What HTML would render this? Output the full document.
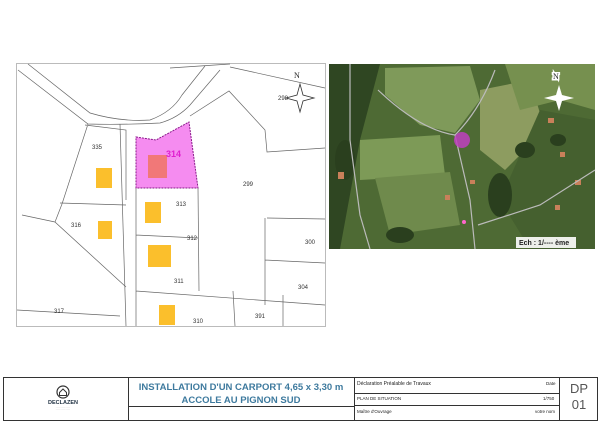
<!DOCTYPE html>
<html><head><meta charset="utf-8"><style>
body{margin:0;width:604px;height:427px;background:#fff;position:relative;overflow:hidden;font-family:"Liberation Sans",sans-serif}
.a{position:absolute}
</style></head><body>
<svg class="a" style="left:0;top:0" width="604" height="370">
<!-- cadastre -->
<rect x="16.5" y="63.5" width="309" height="263" fill="#fff" stroke="#bbb"/>
<g fill="none" stroke="#666" stroke-width="0.7">
<path d="M18 70 L88 124 Q120 125 160 123 Q178 118 190 105 L220 70"/>
<path d="M28 64 L90 113 Q120 122 150 120 Q172 112 182 95 L205 66"/>
<path d="M170 68 L230 64"/>
<path d="M88 124 L62 204 L55 222 L126 287 M85 125 L126 130 L126 200 M60 203 L126 205"/>
<path d="M22 215 L55 222 M120 124 L126 326 M136 188 L136 326 M136 235 L198 238 M136 291 L325 305"/>
<path d="M190 116 L229 91 L265 130 L267 152 L325 148 M198 188 L199 291 M267 218 L325 219 M265 260 L325 263 M265 218 L265 305 M233 291 L235 326 M283 295 L283 326 M17 310 L120 316 M230 67 L325 88"/>
</g>
<path d="M136 137 L156 140 L189 122 L198 188 L136 188 Z" fill="#f58cf0" stroke="#8a1a8a" stroke-width="1" stroke-dasharray="2 1"/>
<rect x="148" y="155" width="19" height="23" fill="#f17878"/>
<g fill="#fbbf2c"><rect x="96" y="168" width="16" height="20"/><rect x="145" y="202" width="16" height="21"/><rect x="98" y="221" width="14" height="18"/><rect x="148" y="245" width="23" height="22"/><rect x="159" y="305" width="16" height="20"/></g>
<g font-size="6" fill="#333" font-family="Liberation Sans">
<text x="92" y="149">335</text><text x="176" y="206">313</text><text x="71" y="227">316</text><text x="187" y="240">312</text><text x="174" y="283">311</text><text x="243" y="186">299</text><text x="305" y="244">300</text><text x="298" y="289">304</text><text x="255" y="318">391</text><text x="193" y="323">310</text><text x="54" y="313">317</text><text x="278" y="100">298</text>
</g>
<text x="166" y="157" font-size="9" font-weight="bold" fill="#e020d0">314</text>
<text x="294" y="78" font-size="8" fill="#222" font-family="Liberation Serif">N</text>
<path d="M300 84 L303 95 L314 98 L303 101 L300 112 L297 101 L286 98 L297 95Z" fill="none" stroke="#333" stroke-width="0.8"/>
<!-- satellite -->
<rect x="329" y="64" width="266" height="185" fill="#4e6a34"/>
<path d="M385 68 L470 66 L480 100 L455 133 L420 125 L385 95Z" fill="#7f9a5a"/>
<path d="M480 90 L530 80 L545 130 L505 170 L480 150Z" fill="#8d9c60"/>
<path d="M360 140 L440 135 L445 175 L360 180Z" fill="#7d9a57"/>
<path d="M375 178 L450 172 L460 225 L390 235Z" fill="#6f8a4c"/>
<path d="M505 64 L595 64 L595 110 L560 100 L520 110Z" fill="#76904f"/>
<path d="M329 64 L380 64 L360 140 L340 249 L329 249Z" fill="#2f4622"/>
<path d="M540 110 L595 120 L595 249 L530 249 L500 200Z" fill="#45602f"/>
<g fill="#2a3f1e"><ellipse cx="500" cy="195" rx="12" ry="22"/><ellipse cx="525" cy="150" rx="10" ry="8"/><ellipse cx="558" cy="140" rx="8" ry="6"/><ellipse cx="400" cy="235" rx="14" ry="8"/><ellipse cx="345" cy="160" rx="10" ry="20"/></g>
<g fill="#c9805a"><rect x="338" y="172" width="6" height="7"/><rect x="548" y="118" width="6" height="5"/><rect x="560" y="152" width="5" height="5"/><rect x="575" y="180" width="6" height="5"/><rect x="470" y="180" width="5" height="4"/><rect x="445" y="195" width="5" height="5"/><rect x="555" y="205" width="5" height="5"/></g>
<g fill="none" stroke="#bbb" stroke-width="1.2">
<path d="M350 64 L350 140 L360 215 L370 249"/>
<path d="M378 90 Q420 130 455 135 Q480 110 495 70"/>
<path d="M455 135 L470 200 L475 249"/><path d="M478 225 L540 205 L595 170"/>
</g>
<circle cx="462" cy="140" r="8" fill="#c040c0" opacity=".85"/>
<circle cx="464" cy="222" r="2" fill="#f6c"/>
<text x="553" y="79" font-size="8" fill="#222" font-family="Liberation Serif" style="paint-order:stroke" stroke="#fff" stroke-width="3">N</text>
<path d="M559 85 L562 95 L574 98 L562 101 L559 111 L556 101 L544 98 L556 95Z" fill="#fff"/>
<rect x="516" y="237" width="60" height="11" fill="#fff" opacity=".9"/>
<text x="519" y="245" font-size="7" font-weight="bold" fill="#222">Ech : 1/---- ème</text>
</svg>
<!-- footer -->
<div class="a" style="left:3px;top:377px;width:595px;height:44px;border:1px solid #333;box-sizing:border-box"></div>
<div class="a" style="left:128px;top:377px;width:1px;height:44px;background:#333"></div>
<div class="a" style="left:354px;top:377px;width:1px;height:44px;background:#333"></div>
<div class="a" style="left:559px;top:377px;width:1px;height:44px;background:#333"></div>
<div class="a" style="left:128px;top:406px;width:226px;height:1px;background:#333"></div>
<div class="a" style="left:354px;top:393px;width:205px;height:1px;background:#333"></div>
<div class="a" style="left:354px;top:405px;width:205px;height:1px;background:#333"></div>
<div class="a" style="left:128px;top:381px;width:226px;text-align:center;color:#3e7a9e;font-weight:bold;font-size:9.5px;line-height:13px">INSTALLATION D'UN CARPORT 4,65 x 3,30 m<br>ACCOLE AU PIGNON SUD</div>
<svg class="a" style="left:56px;top:385px" width="14" height="14"><circle cx="7" cy="7" r="6" fill="none" stroke="#333" stroke-width="1.2"/><path d="M3.5 7.5 L7 4 L10.5 7.5 V10.5 H3.5Z" fill="none" stroke="#333"/></svg>
<div class="a" style="left:40px;top:400px;width:46px;text-align:center;font-size:5.5px;font-weight:bold;color:#234">DECLAZEN</div>
<div class="a" style="left:42px;top:407px;width:42px;height:5px;font-size:2px;color:#999;text-align:center">..........................<br>..........................</div>
<div class="a" style="left:357px;top:381px;font-size:5px;color:#222">Déclaration Préalable de Travaux</div>
<div class="a" style="left:546px;top:381px;font-size:4.5px;color:#222">Date</div>
<div class="a" style="left:357px;top:396px;font-size:4.5px;color:#222">PLAN DE SITUATION</div>
<div class="a" style="left:543px;top:396px;font-size:4.5px;color:#222">1/750</div>
<div class="a" style="left:357px;top:409px;font-size:4.5px;color:#222">Maître d'Ouvrage</div>
<div class="a" style="left:535px;top:409px;font-size:4.5px;color:#222">votre nom</div>
<div class="a" style="left:560px;top:381px;width:38px;text-align:center;font-size:13px;line-height:16px;color:#555">DP<br>01</div>
</body></html>
